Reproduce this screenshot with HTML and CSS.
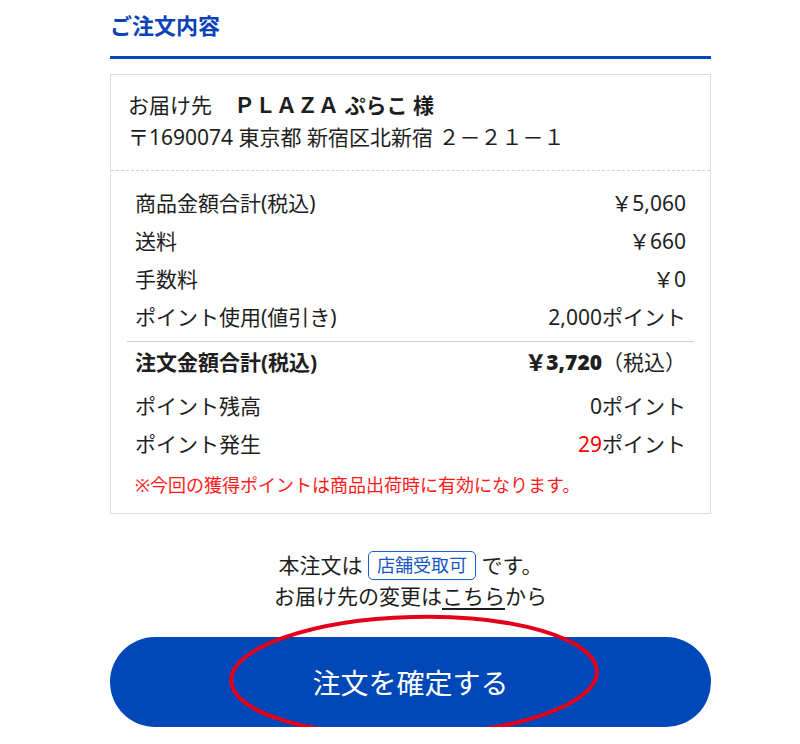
FILE: index.html
```html
<!DOCTYPE html>
<html lang="ja">
<head>
<meta charset="utf-8">
<title>ご注文内容</title>
<link rel="stylesheet" href="styles.css">
</head>
<body>
<div class="page">
  <h2 class="title">ご注文内容</h2>
  <div class="box">
    <div class="dest">
      <div class="dest-name">お届け先<span class="name">ＰＬＡＺＡ ぷらこ 様</span></div>
      <div class="dest-addr">〒1690074 東京都 新宿区北新宿 ２－２１－１</div>
    </div>
    <div class="summary">
      <div class="group">
        <div class="row"><span>商品金額合計(税込)</span><span>￥5,060</span></div>
        <div class="row"><span>送料</span><span>￥660</span></div>
        <div class="row"><span>手数料</span><span>￥0</span></div>
        <div class="row"><span>ポイント使用(値引き)</span><span>2,000ポイント</span></div>
      </div>
      <div class="row total"><span>注文金額合計(税込)</span><span><b>￥3,720</b><span class="tax">（税込）</span></span></div>
      <div class="row points"><span>ポイント残高</span><span>0ポイント</span></div>
      <div class="row"><span>ポイント発生</span><span><span class="red">29</span>ポイント</span></div>
      <p class="note">※今回の獲得ポイントは商品出荷時に有効になります。</p>
    </div>
  </div>
  <div class="info">
    <div>本注文は <span class="badge">店舗受取可</span> です。</div>
    <div>お届け先の変更は<a class="link" href="#">こちら</a>から</div>
  </div>
  <div class="btn-wrap">
    <button class="btn" type="button">注文を確定する</button>
    <svg class="circle" width="376" height="128" viewBox="0 0 376 128" aria-hidden="true">
      <ellipse cx="188" cy="64" rx="183" ry="59" fill="none" stroke="#e2001b" stroke-width="4" transform="rotate(-1.5 188 64)"/>
    </svg>
  </div>
</div>
</body>
</html>
```

FILE: styles.css
```css
* { box-sizing: border-box; }
html, body { margin: 0; padding: 0; background: #fff; }
body {
  font-family: "Noto Sans", "Noto Sans CJK JP", sans-serif;
  color: #1e1e1e;
}
.page {
  width: 601px;
  margin-left: 110px;
  padding-top: 8px;
}
.title {
  margin: 0;
  font-size: 22px;
  line-height: 35px;
  font-weight: 700;
  color: #0a43b8;
  padding-bottom: 13px;
  border-bottom: 3px solid #0047ba;
}
.box {
  margin-top: 15px;
  border: 1px solid #dcdcdc;
}
.dest {
  padding: 14px 17px 17px;
  border-bottom: 1px dashed #d4d4d4;
  font-size: 21px;
  line-height: 32px;
}
.name {
  font-weight: 700;
  margin-left: 22px;
}
.summary {
  padding: 13px 16px 13px;
}
.group {
  border-bottom: 1px solid #cfcfcf;
  padding-bottom: 5px;
}
.row {
  display: flex;
  justify-content: space-between;
  padding: 0 8px;
  font-size: 21px;
  line-height: 38px;
}
.total { margin-top: 1px; font-weight: 700; }
.total .tax { font-weight: 400; }
.points { margin-top: 6px; }
.red { color: #ff0000; }
.note {
  margin: 7px 0 0;
  padding: 0 8px;
  font-size: 18px;
  line-height: 30px;
  color: #ff1a1a;
}
.info {
  margin-top: 36px;
  text-align: center;
  font-size: 21px;
  line-height: 31px;
}
.badge {
  display: inline-block;
  border: 1.5px solid #1f5fc9;
  border-radius: 5px;
  color: #1556c2;
  font-size: 18px;
  line-height: 27px;
  padding: 0 8px;
  vertical-align: 1px;
}
.link { color: inherit; text-decoration: underline; text-underline-offset: 4px; }
.btn-wrap {
  position: relative;
  margin-top: 25px;
}
.btn {
  display: block;
  width: 100%;
  height: 90px;
  border: none;
  border-radius: 45px;
  background: #0047b8;
  color: #fff;
  font-family: inherit;
  font-size: 28px;
  padding: 0;
}
.circle {
  position: absolute;
  left: 116px;
  top: -25px;
  pointer-events: none;
}
```
